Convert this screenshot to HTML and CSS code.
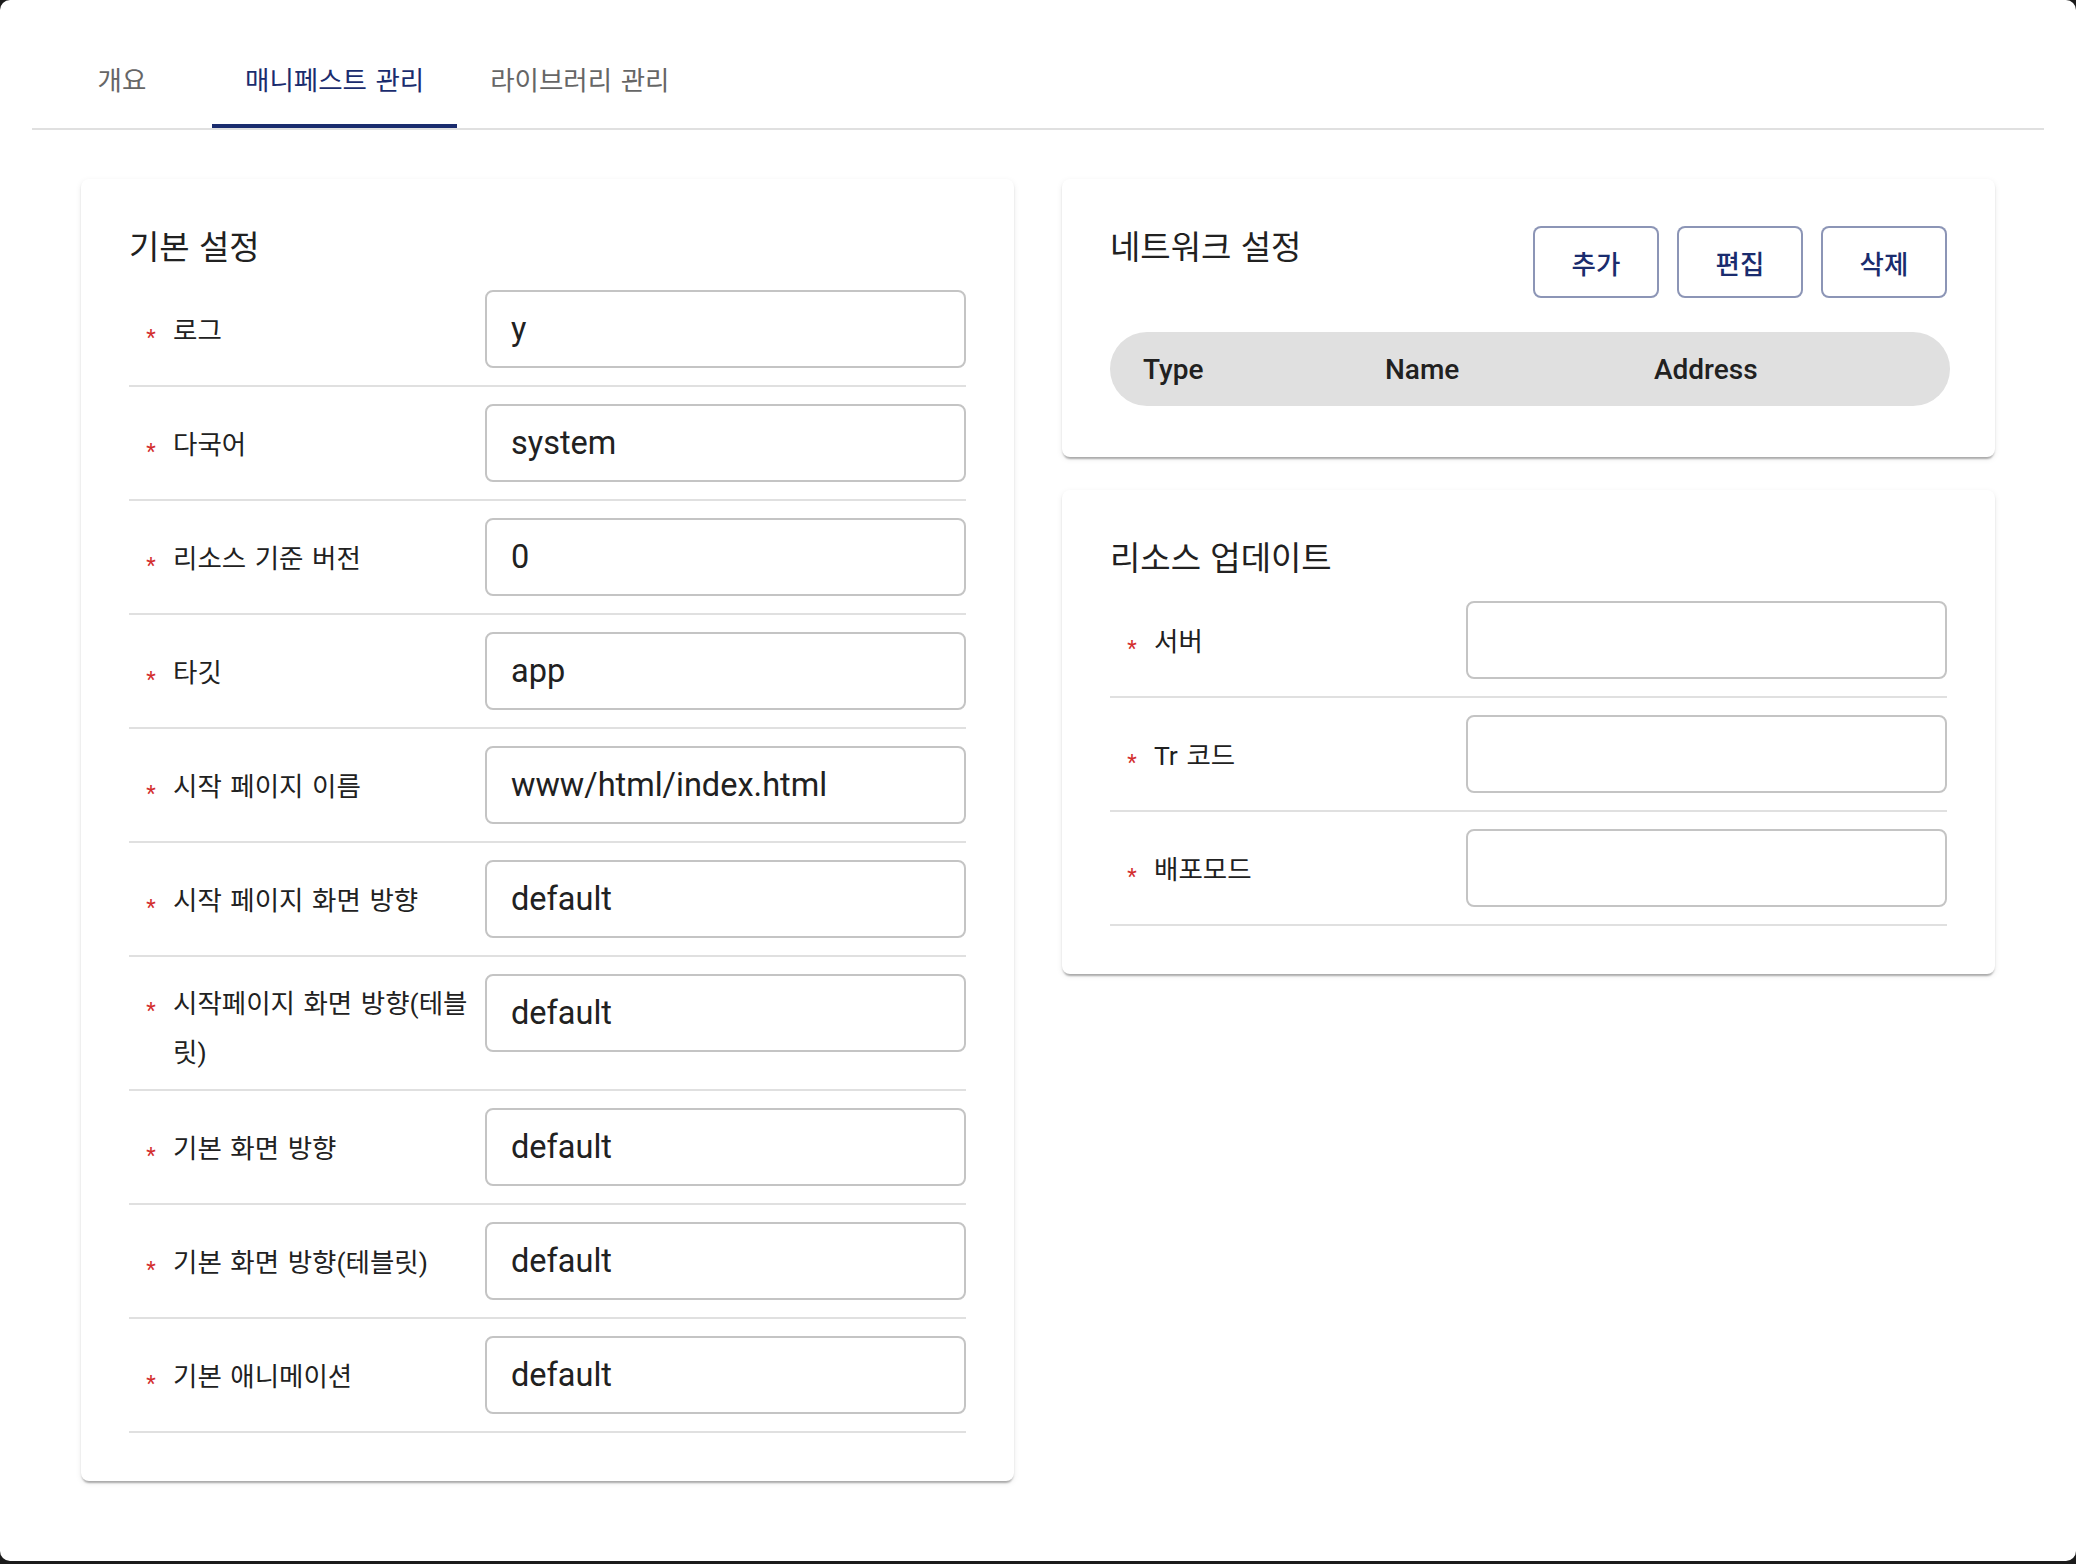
FILE: index.html
```html
<!DOCTYPE html>
<html lang="ko">
<head>
<meta charset="utf-8">
<title>매니페스트 관리</title>
<link rel="stylesheet" href="styles.css">
</head>
<body>
<div class="window">
  <nav class="tabs">
    <div class="tab">개요</div>
    <div class="tab active">매니페스트 관리</div>
    <div class="tab">라이브러리 관리</div>
  </nav>

  <main class="content">
    <section class="card">
      <h2 class="card-title">기본 설정</h2>
      <div class="row"><div class="label"><span class="req">*</span><span class="label-text">로그</span></div><input class="field" type="text" value="y" readonly></div>
      <div class="row"><div class="label"><span class="req">*</span><span class="label-text">다국어</span></div><input class="field" type="text" value="system" readonly></div>
      <div class="row"><div class="label"><span class="req">*</span><span class="label-text">리소스 기준 버전</span></div><input class="field" type="text" value="0" readonly></div>
      <div class="row"><div class="label"><span class="req">*</span><span class="label-text">타깃</span></div><input class="field" type="text" value="app" readonly></div>
      <div class="row"><div class="label"><span class="req">*</span><span class="label-text">시작 페이지 이름</span></div><input class="field" type="text" value="www/html/index.html" readonly></div>
      <div class="row"><div class="label"><span class="req">*</span><span class="label-text">시작 페이지 화면 방향</span></div><input class="field" type="text" value="default" readonly></div>
      <div class="row"><div class="label"><span class="req">*</span><span class="label-text">시작페이지 화면 방향(테블릿)</span></div><input class="field" type="text" value="default" readonly></div>
      <div class="row"><div class="label"><span class="req">*</span><span class="label-text">기본 화면 방향</span></div><input class="field" type="text" value="default" readonly></div>
      <div class="row"><div class="label"><span class="req">*</span><span class="label-text">기본 화면 방향(테블릿)</span></div><input class="field" type="text" value="default" readonly></div>
      <div class="row"><div class="label"><span class="req">*</span><span class="label-text">기본 애니메이션</span></div><input class="field" type="text" value="default" readonly></div>
    </section>

    <div class="side">
      <section class="card card-network">
        <div class="card-head">
          <h2 class="card-title">네트워크 설정</h2>
          <div class="actions">
            <button class="btn" type="button">추가</button>
            <button class="btn" type="button">편집</button>
            <button class="btn" type="button">삭제</button>
          </div>
        </div>
        <div class="table-head">
          <span>Type</span>
          <span>Name</span>
          <span>Address</span>
        </div>
      </section>

      <section class="card">
        <h2 class="card-title">리소스 업데이트</h2>
        <div class="row"><div class="label"><span class="req">*</span><span class="label-text">서버</span></div><input class="field" type="text" value="" readonly></div>
        <div class="row"><div class="label"><span class="req">*</span><span class="label-text">Tr 코드</span></div><input class="field" type="text" value="" readonly></div>
        <div class="row"><div class="label"><span class="req">*</span><span class="label-text">배포모드</span></div><input class="field" type="text" value="" readonly></div>
      </section>
    </div>
  </main>
</div>
</body>
</html>
```

FILE: styles.css
```css
html {
  background: #1b1b1b;
}

body {
  margin: 0;
  font-family: Roboto, "Noto Sans CJK KR", sans-serif;
  color: #212121;
}

.window {
  background: #fff;
  height: 1561px;
  border-radius: 10px;
  overflow: hidden;
}

/* ---- tab bar ---- */
.tabs {
  display: flex;
  margin: 32px 32px 0;
  border-bottom: 2px solid #e0e0e0;
}

.tab {
  min-width: 180px;
  height: 96px;
  box-sizing: border-box;
  padding: 0 33px;
  display: flex;
  align-items: center;
  justify-content: center;
  font-size: 26.5px;
  word-spacing: 2px;
  color: #666;
  border-bottom: 4px solid transparent;
}

.tab.active {
  color: #1a2c6e;
  border-bottom-color: #1a2c6e;
}

/* ---- layout ---- */
.content {
  display: grid;
  grid-template-columns: 933px 933px;
  column-gap: 48px;
  align-items: start;
  padding: 49px 81px;
}

.side {
  display: flex;
  flex-direction: column;
  gap: 33px;
}

.card {
  background: #fff;
  border-radius: 8px;
  padding: 40px 48px 48px;
  box-shadow: 0 4px 2px -2px rgba(0, 0, 0, 0.2),
              0 2px 2px 0 rgba(0, 0, 0, 0.12),
              0 2px 6px 0 rgba(0, 0, 0, 0.08);
}

.card-title {
  margin: 0;
  padding-top: 3px;
  height: 54px;
  box-sizing: border-box;
  font-size: 33px;
  line-height: 51px;
  font-weight: 400;
  word-spacing: 1px;
  color: #212121;
}

/* ---- form rows ---- */
.row {
  display: flex;
  align-items: center;
  padding: 17px 0;
  border-bottom: 2px solid #e0e0e0;
}

.label {
  width: 356px;
  flex: none;
  display: flex;
  align-items: flex-start;
  padding-top: 5px;
  margin-bottom: -5px;
  font-size: 26.5px;
  line-height: 49px;
  word-spacing: 2px;
}

.req {
  width: 44px;
  flex: none;
  box-sizing: border-box;
  padding-top: 7px;
  text-align: center;
  color: #d32f2f;
  font-size: 22px;
}

.label-text {
  flex: 1;
  min-width: 0;
}

.field {
  flex: 1;
  min-width: 0;
  align-self: flex-start;
  height: 78px;
  box-sizing: border-box;
  margin: 0;
  padding: 0 24px;
  border: 2px solid #c4c4c4;
  border-radius: 8px;
  background: #fff;
  font-family: Roboto, "Noto Sans CJK KR", sans-serif;
  font-size: 32.5px;
  color: #212121;
  outline: none;
}

/* ---- network card ---- */
.card-network {
  padding-bottom: 51px;
}

.card-head {
  display: flex;
  justify-content: space-between;
  align-items: flex-start;
}

.actions {
  display: flex;
  gap: 18px;
  margin-top: 7px;
}

.btn {
  width: 126px;
  height: 72px;
  box-sizing: border-box;
  border: 2px solid rgba(26, 44, 110, 0.5);
  border-radius: 8px;
  background: #fff;
  color: #1a2c6e;
  font-family: Roboto, "Noto Sans CJK KR", sans-serif;
  font-size: 26.5px;
  font-weight: 500;
  padding: 0;
}

.table-head {
  margin-top: 34px;
  margin-right: -3px;
  height: 74px;
  border-radius: 37px;
  background: #e0e0e0;
  display: grid;
  grid-template-columns: 242px 269px 1fr;
  align-items: center;
  padding-left: 33px;
  font-size: 28px;
  font-weight: 500;
  color: #212121;
}
```
